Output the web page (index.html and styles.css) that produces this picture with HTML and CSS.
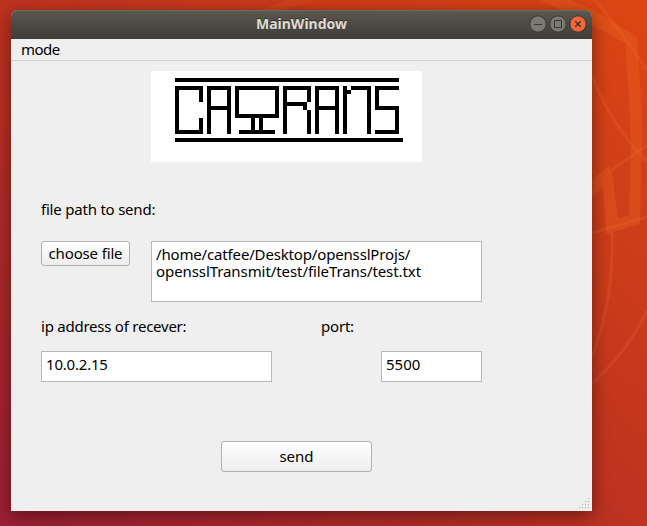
FILE: index.html
```html
<!DOCTYPE html>
<html lang="en">
<head>
<meta charset="utf-8">
<title>MainWindow</title>
<link rel="stylesheet" href="styles.css">
</head>
<body>
<svg class="wallpaper" viewBox="0 0 647 526" aria-hidden="true">
  <g fill="#f06a20" fill-opacity=".3">
    <path d="M540 0h30l22 9 45 28 4 63 1 40-2 84-34 10-3-47-11 10v-17l17-14 3 6 6 46 11-3 2-75-2-40-4-57-33-18z"/>
    <path d="M22 10 50 0h23L60 10z" opacity=".2"/>
    <path d="M260 10 287 0h30l-35 10z" opacity=".5"/>
  </g>
  <g fill="none" stroke="#f07838" stroke-opacity=".2" stroke-width="3">
    <path d="M595 0q27 31 52 71"/>
    <path d="M592 75q17 47 55 87M612 170l35-25M592 233l55-16"/>
    <path d="M612 232q2 72-22 130M590 385q36-31 57-74"/>
  </g>
</svg>
<main class="window">
  <header class="titlebar">
    <h1>MainWindow</h1>
    <div class="controls">
      <svg viewBox="0 0 18 18"><circle cx="9" cy="9" r="8.2"/><path d="M5 9.5h8"/></svg>
      <svg viewBox="0 0 18 18"><circle cx="9" cy="9" r="8.2"/><path d="M5.5 5.5h7v7h-7z"/></svg>
      <svg class="close" viewBox="0 0 18 18"><circle cx="9" cy="9" r="8.2"/><path d="m6.3 6.3 5.4 5.4m0-5.4-5.4 5.4"/></svg>
    </div>
  </header>
  <nav class="menubar"><span class="t-mode">mode</span></nav>
  <section class="content">
    <svg class="logo" viewBox="0 0 271 91" shape-rendering="crispEdges">
      <path d="M24 7h224v4H24zM24 67h228v4H24z"/>
      <path d="M24 15h28v16h-4V19H28v40h20V47h4v16H24z"/>
      <path d="M56 15h24v48h-4V39H60v24h-4zM60 19v16h16V19z" fill-rule="evenodd"/>
      <path d="M84 15h44v32h-16v12h12v4H88v-4h12V47H84zM88 19v24h36V19zM104 47v12h4V47z" fill-rule="evenodd"/>
      <path d="M132 15h28v4h-28zM132 19h4v44h-4zM156 19h4v12h-4zM136 31h20v4h-20zM152 35h4v4h-4zM156 39h4v24h-4z"/>
      <path d="M164 15h24v48h-4V39h-16v24h-4zM168 19v16h16V19z" fill-rule="evenodd"/>
      <path d="M192 15h4v4h4v4h-4v40h-4zM200 15h20v48h-4V19h-16z"/>
      <path d="M224 15h24v4h-20v16h20v28h-24v-4h20V39h-20z"/>
    </svg>
    <p class="path-label"><span class="t-path">file path to send:</span></p>
    <div class="file-row">
      <button class="choose"><span class="t-choose">choose file</span></button>
      <div class="field path"><span class="t-line1">/home/catfee/Desktop/opensslProjs/</span><br><span class="t-line2">opensslTransmit/test/fileTrans/test.txt</span></div>
    </div>
    <div class="address">
      <label class="t-ip">ip address of recever:</label>
      <label class="t-port">port:</label>
      <div class="field ip"><span class="t-addr">10.0.2.15</span></div>
      <div class="field port"><span class="t-num">5500</span></div>
    </div>
    <button class="send"><span class="t-send">send</span></button>
  </section>
  <svg class="grip" viewBox="0 0 12 12" shape-rendering="crispEdges"><path d="M9 0h1v1H9zM6 3h1v1H6zM9 3h1v1H9zM3 6h1v1H3zM6 6h1v1H6zM9 6h1v1H9zM0 9h1v1H0zM3 9h1v1H3zM6 9h1v1H6zM9 9h1v1H9z"/></svg>
</main>
</body>
</html>
```
FILE: styles.css
```css
* { box-sizing: border-box; }
body {
  margin: 0;
  height: 526px;
  padding: 10px 55px 15px 11px;
  overflow: hidden;
  position: relative;
  background: linear-gradient(39deg, #9b1f33 0%, #b93022 43%, #c93a1b 68%, #dd4613 100%);
  font: 15px/17px "Noto Sans", sans-serif;
  color: #000;
}
.wallpaper { position: absolute; inset: 0; width: 647px; height: 526px; }
.window {
  position: relative;
  height: 501px;
  background: #efefef;
  border-radius: 7px 7px 0 0;
  box-shadow: 0 4px 17px rgba(0, 0, 0, .45);
}
.titlebar {
  height: 29px;
  display: grid;
  grid-template-columns: 1fr;
  align-items: center;
  background: linear-gradient(#605d54, #58554c 10%, #3e3d38);
  border-radius: 7px 7px 0 0;
  box-shadow: inset 0 1px #6b685e;
}
.titlebar > * { grid-area: 1 / 1; }
h1 {
  margin: 0;
  padding-bottom: 2px;
  text-align: center;
  font: bold 14px/26px "Noto Sans", sans-serif;
  color: #dfdbd2;
  text-shadow: 0 -1px #302f2a;
}
.controls { display: flex; justify-content: end; gap: 2px; padding: 0 5px 1px 0; }
.controls svg { width: 18px; height: 18px; fill: #7b7971; stroke: #383731; }
.controls .close { fill: #f1663a; }
.close path { stroke-width: 1.5; }
.menubar { height: 22px; padding: 2px 10px; border-bottom: 1px solid #d0d0d0; }
.content { padding: 10px 0 0 30px; }
.logo { display: block; width: 271px; height: 91px; margin-left: 110px; background: #fff; }
p { margin: 39px 0 0; }
.file-row { display: flex; align-items: flex-start; gap: 21px; margin-top: 23px; }
button {
  display: block;
  padding: 0;
  border: 1px solid #b0b0b0;
  border-radius: 3px;
  background: linear-gradient(#fff, #ededed);
  font: inherit;
  color: inherit;
}
.choose { width: 89px; height: 25px; }
.field { height: 31px; padding: 4px; background: #fff; border: 1px solid #b8b8b8; white-space: nowrap; }
.path { width: 331px; height: 61px; }
.address {
  display: grid;
  grid-template-columns: 231px 49px 60px 101px;
  grid-template-rows: 17px 31px;
  row-gap: 16px;
  margin-top: 16px;
}
.address label { white-space: nowrap; }
.t-port { grid-area: 1 / 3; }
.ip { grid-area: 2 / 1; }
.port { grid-area: 2 / 4; }
.send { width: 151px; height: 31px; margin: 59px 0 0 180px; }
.t-mode { letter-spacing: -.5px; }
.t-path { letter-spacing: -.21px; }
.t-choose { letter-spacing: -.15px; }
.t-line1 { letter-spacing: -.16px; }
.t-line2 { letter-spacing: -.08px; }
.t-ip { letter-spacing: -.24px; }
.t-port { letter-spacing: -.2px; }
.t-addr { letter-spacing: -.2px; }
.grip { position: absolute; right: 1px; bottom: 1px; width: 12px; height: 12px; fill: #aaa; }
```
